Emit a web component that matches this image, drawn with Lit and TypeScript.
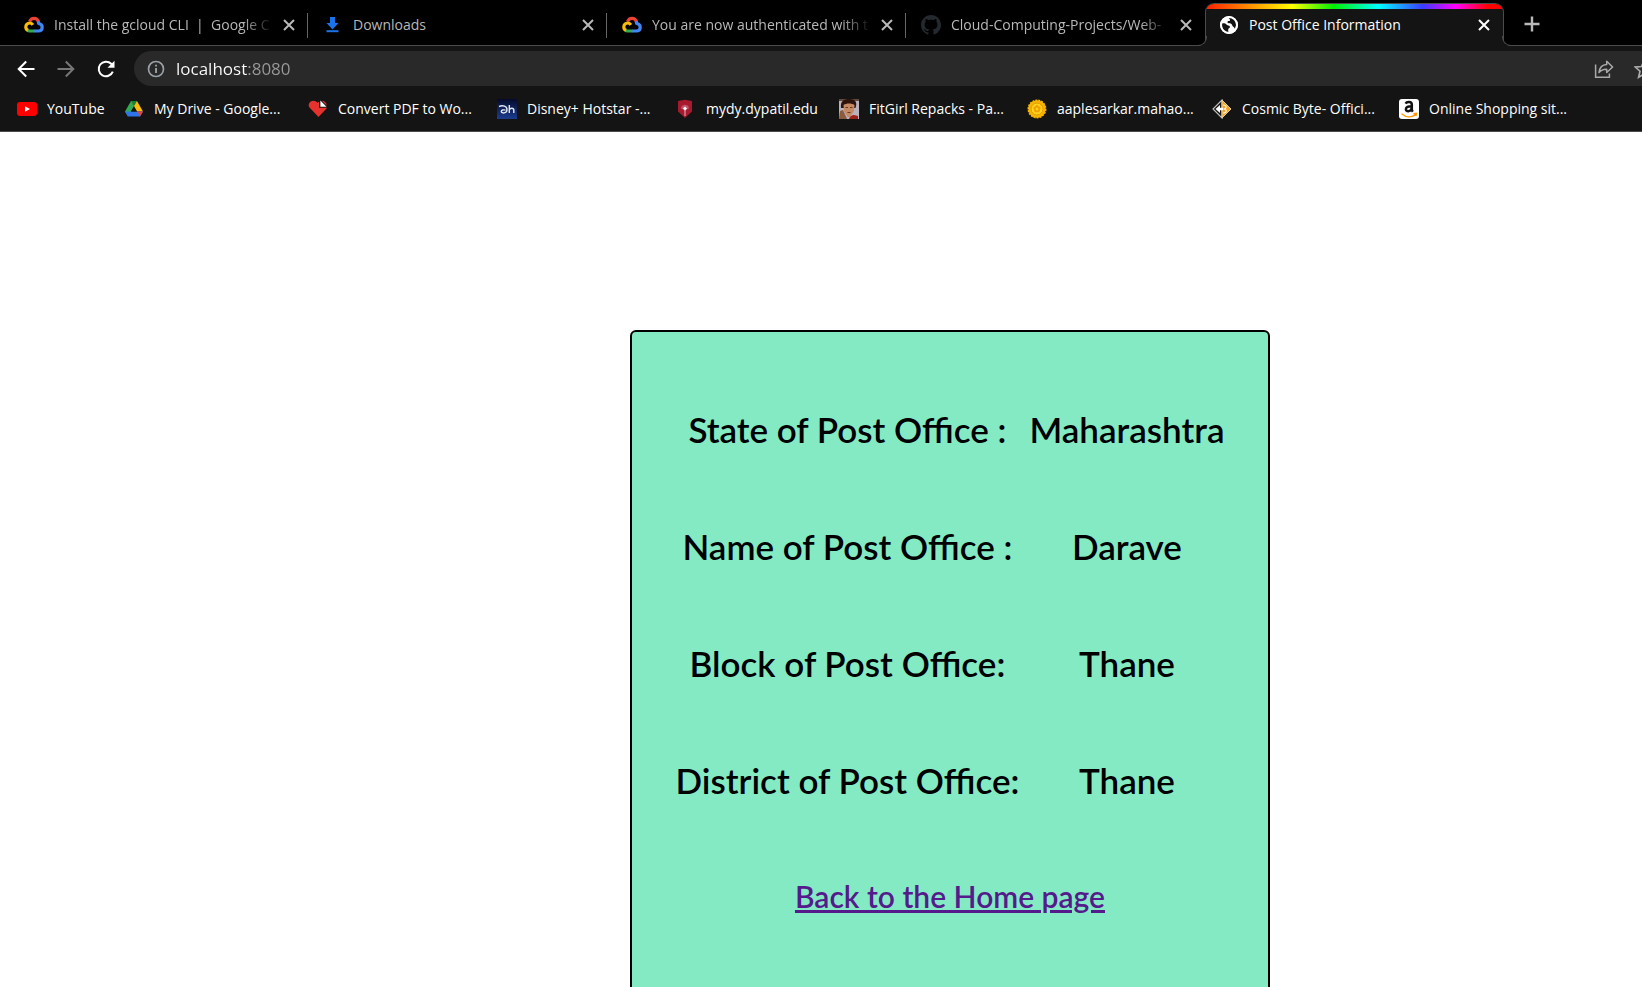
import { LitElement, html, css, svg, TemplateResult } from "lit";
import { customElement } from "lit/decorators.js";
import { classMap } from "lit/directives/class-map.js";

interface Tab {
  title: string;
  icon: TemplateResult;
  active?: boolean;
  faded?: boolean;
}

interface Bookmark {
  label: string;
  icon: TemplateResult;
}

const glyph = (body: TemplateResult, box = 20) =>
  html`<svg class="glyph" viewBox="0 0 ${box} ${box}" aria-hidden="true">${body}</svg>`;

const cloud = glyph(svg`
  <g fill="none" stroke-width="3.2" stroke-linejoin="round">
    <path d="M5.600 6.600C6.600 4 8.400 3.400 10 3.400s3.800 1 4.600 3.600" stroke="#ea4335"/>
    <path d="M14.200 6.200c.3 1 .4 1.600.4 2.300 2.400.3 3.600 1.900 3.600 3.700 0 2.300-1.600 3.800-3.900 3.800H10" stroke="#4285f4"/>
    <path d="M10.300 16H5.500c-.9 0-1.500-.2-2.200-.6" stroke="#34a853"/>
    <path d="M4 15.300C2.500 14.600 1.800 13.300 1.800 11.900c0-2.300 1.800-3.900 3.800-3.900 1.500 0 2.600.7 3.300 1.800" stroke="#fbbc05"/>
  </g>`);

const download = glyph(svg`
  <path d="M7 2h5v6h3.500l-6 6.500-6-6.500H7z" fill="#1a73e8"/>
  <path d="M3.500 15.200h12v2h-12z" fill="#1a73e8"/>`);

const github = glyph(
  svg`<path fill="#24292f" d="M8 0C3.580 0 0 3.580 0 8c0 3.540 2.290 6.530 5.470 7.590.4.070.550-.170.550-.380 0-.190-.010-.820-.010-1.490-2.010.370-2.530-.490-2.690-.940-.090-.230-.480-.940-.820-1.130-.280-.150-.680-.520-.010-.530.630-.010 1.080.580 1.230.820.720 1.210 1.870.870 2.330.660.070-.520.280-.870.510-1.070-1.780-.200-3.640-.890-3.640-3.950 0-.870.310-1.590.820-2.150-.080-.200-.360-1.020.080-2.120 0 0 .670-.210 2.200.820.640-.180 1.320-.270 2-.270s1.360.090 2 .270c1.530-1.040 2.200-.820 2.200-.820.440 1.100.160 1.920.080 2.120.510.560.820 1.270.820 2.150 0 3.070-1.870 3.750-3.650 3.950.290.250.540.730.540 1.480 0 1.070-.010 1.930-.010 2.200 0 .210.150.460.550.380A8 8 0 0 0 8 0z"/>`,
  16
);

const globe = glyph(svg`
  <circle cx="10" cy="10" r="9" fill="#fff"/>
  <path d="M2.800 8.500c1.800-.6 3.700-.2 4.700 1.100.7.900 1.700.8 2.600 1.100 1.300.5 1 2-.1 2.500-1 .5-.9 1.700-.6 3.900C5.500 17 2.400 13.500 2.800 8.500z" fill="#141414"/>
  <path d="M9.700 3c2.700-.6 5.600 1 6.800 3.600 1.100 2.400.8 5.200-.6 7.200-.4-1.600-1.500-1.700-2.200-2.600-.9-1.200-.6-2.200-2-2.600-1.300-.3-2.700.1-3.200-1-.4-1.100.7-1.600 1.700-1.500C11.500 6.200 11.300 4.500 9.700 3z" fill="#141414"/>
  <circle cx="10" cy="10" r="8" fill="none" stroke="#fff" stroke-width="2"/>`);

const cross = glyph(svg`<path d="M5 5l10 10M15 5 5 15" fill="none" stroke="currentColor" stroke-width="2"/>`);
const plus = glyph(svg`<path d="M10 2.500v15M2.500 10h15" fill="none" stroke="currentColor" stroke-width="2.400"/>`);
const back = glyph(svg`<path d="M18.500 10H3M10.200 2.500 2.700 10l7.500 7.500" fill="none" stroke="currentColor" stroke-width="2"/>`);
const forward = glyph(svg`<path d="M1.500 10H17M9.800 2.500l7.500 7.500-7.500 7.500" fill="none" stroke="currentColor" stroke-width="2"/>`);
const reload = glyph(svg`
  <path d="M16.800 12.600A7.300 7.300 0 1 1 15.200 4.800l1.600 1.700" fill="none" stroke="currentColor" stroke-width="2"/>
  <path d="M18.500 1.800v7h-7z" fill="currentColor"/>`);
const info = glyph(svg`
  <circle cx="10" cy="10" r="7.500" fill="none" stroke="currentColor" stroke-width="1.700"/>
  <path d="M9.100 9h1.900v5H9.100zM9.100 5.800h1.900v1.800H9.100z" fill="currentColor"/>`);
const share = glyph(svg`
  <path d="M1.600 5.500v12.700h13.800v-3.600" fill="none" stroke="currentColor" stroke-width="1.500"/>
  <path d="M5 13.500C5.600 8.500 8.800 5.800 12.700 5.600V2.200L18.600 8l-5.900 5.500v-3.300C9.600 10.100 7 11 5 13.500z" fill="none" stroke="currentColor" stroke-width="1.500" stroke-linejoin="round"/>`);
const star = glyph(svg`<path d="m10 1.800 2.500 5.700 6.200.6-4.700 4.100 1.400 6.100-5.400-3.200-5.400 3.200 1.400-6.100L1.300 8.100l6.200-.6z" fill="none" stroke="currentColor" stroke-width="1.700"/>`);

const youtube = glyph(svg`
  <rect x="0" y="3" width="20" height="14" rx="3" fill="#f00"/>
  <path d="M8 7.200v5.600l5-2.800z" fill="#fff"/>`);
const drive = glyph(svg`
  <path d="M7 2 1 12.500l3 5L10 7.200z" fill="#34a853"/>
  <path d="M7 2h6l6 10.500h-6z" fill="#fbbc05"/>
  <path d="M7 2h6l-3 5.200z" fill="#188038"/>
  <path d="M1 12.500h18l-3 5H4z" fill="#2f74e8"/>
  <path d="M10 7.400 7.100 12.400h5.800z" fill="#141414"/>
  <path d="M13.500 12.500H19l-3 5z" fill="#ea4335"/>`);
const heart = glyph(svg`
  <path d="M10.500 18 1.500 8.600C.2 7 .4 4.200 2.400 2.700 4.900 1 7.800 1.600 9.600 4.100L11 2.500v6.300h8.200z" fill="#e5322d"/>
  <path d="M12.400 1.500v6.200h6.100z" fill="#fff"/>
  <path d="M13.800 1.700c2.400 0 4.700 1.900 5 4.700z" fill="#e5322d"/>`);
const hotstar = glyph(svg`
  <defs><linearGradient id="hs" x2="0" y2="1"><stop stop-color="#050a2c"/><stop offset="1" stop-color="#1b3d8f"/></linearGradient></defs>
  <rect width="20" height="20" fill="url(#hs)"/>
  <path d="M2 7.500c4-1.600 8-.3 8 3.200 0 3.700-5.500 4.200-5.700 1.700-.1-1.500 2.500-1.700 4.200-1.300M12.300 6v8M12.300 11c.7-2.200 4.500-2.600 4.500.4V14" fill="none" stroke="#e4e8f5" stroke-width="1.400"/>`);
const crest = glyph(svg`
  <path d="M2 2 9 .8 16 2v10.500L9 19l-7-6.500z" fill="#a6192e"/>
  <path d="M5 9.500c0-5 8-5 8 0l-4 2z" fill="#c0566a"/>
  <path d="M7 9.500 9 7.500l2 2-2 2z" fill="#fff"/>
  <path d="M9 11v6" stroke="#e8b9bf" stroke-width="1"/>`);
const portrait = glyph(svg`
  <rect width="20" height="20" fill="#b9b2bd"/>
  <path d="M0 0h20v2H0z" fill="#5f4a3c"/>
  <path d="M2 9C1 2 5 0 10 0s9 2 6.500 9z" fill="#2e130d"/>
  <path d="M4.500 6c3-2 8-2 11 0l-.5 6-4 6H8.500L5 12z" fill="#c58a63"/>
  <path d="M0 20l1-8 3-1 4 9z" fill="#8c5a3e"/>
  <path d="M10 20c1-3 3-4 5-4l4 1v3z" fill="#9f2219"/>
  <path d="M6.500 8.500h2.500M11 8.500h2.500M8.500 13.500h3" stroke="#6b3826" stroke-width="1"/>`);
const seal = glyph(svg`
  <circle cx="10" cy="10" r="8.700" fill="#f7b500" stroke="#f7b500" stroke-width="1.600" stroke-dasharray="2 1"/>
  <circle cx="10" cy="10" r="6" fill="#ffd21f" stroke="#e79a00" stroke-width="1"/>
  <path d="m10 5.800 3.800 2.900-1.500 4.600H7.700L6.200 8.700z" fill="#f0a000"/>
  <circle cx="10" cy="10" r="1.500" fill="#ffcf1a"/>`);
const cosmic = glyph(svg`
  <path d="M10 1v18l-9-9z" fill="#111" stroke="#bbb" stroke-width="1.200"/>
  <path d="M10 1l9 9-9 9z" fill="#f0a422" stroke="#e0c9a0" stroke-width="1"/>
  <path d="M3.500 10 8 6v2.700h3v2.600H8V14z" fill="#fff"/>
  <path d="M11 6c4 0 4 3.600.5 4 4 .4 3.500 4-.5 4" fill="none" stroke="#fff1cf" stroke-width="1.200"/>`);
const amazon = glyph(svg`
  <rect width="20" height="20" rx="3" fill="#fff"/>
  <path d="M6.600 4.600C7.600 2.600 12.800 2.200 12.800 5.600v5.200c0 .8.400 1.200 1 1.900M12.600 7.200C9 7.100 6.900 8 6.900 10.300c0 2.600 4.600 2.600 5.700-.6" fill="none" stroke="#111" stroke-width="2.500"/>
  <path d="M2.500 14.800c4.500 3.800 10 3.800 14 .8M14.500 14.800l3-.4-.6 2.600" fill="none" stroke="#f90" stroke-width="1.400"/>`);

const TABS: Tab[] = [
  { title: "Install the gcloud CLI  |  Google C", icon: cloud, faded: true },
  { title: "Downloads", icon: download },
  { title: "You are now authenticated with t", icon: cloud, faded: true },
  { title: "Cloud-Computing-Projects/Web-", icon: github, faded: true },
  { title: "Post Office Information", icon: globe, active: true },
];

const BOOKMARKS: Bookmark[] = [
  { label: "YouTube", icon: youtube },
  { label: "My Drive - Google...", icon: drive },
  { label: "Convert PDF to Wo...", icon: heart },
  { label: "Disney+ Hotstar -...", icon: hotstar },
  { label: "mydy.dypatil.edu", icon: crest },
  { label: "FitGirl Repacks - Pa...", icon: portrait },
  { label: "aaplesarkar.mahao...", icon: seal },
  { label: "Cosmic Byte- Offici...", icon: cosmic },
  { label: "Online Shopping sit...", icon: amazon },
];

const RECORD: [string, string][] = [
  ["State of Post Office :", "Maharashtra"],
  ["Name of Post Office :", "Darave"],
  ["Block of Post Office:", "Thane"],
  ["District of Post Office:", "Thane"],
];

const shared = css`
  :host, * { box-sizing: border-box; }
  .glyph { display: block; width: 20px; height: 20px; flex: none; }
  button { display: grid; place-items: center; padding: 0; border: 0; background: none; font: inherit; color: inherit; }
`;

@customElement("tab-strip")
class TabStrip extends LitElement {
  static styles = [
    shared,
    css`
      :host { display: flex; height: 46px; padding: 3px 0 0 9px; background: #000; border-bottom: 1px solid #4b4b4b; color: #b8b8b8; }
      .tab { position: relative; display: flex; align-items: center; flex: 0 0 299px; min-width: 0; height: 43px; padding: 1px 9px 0 15px; }
      .tab::after { content: ""; width: 1px; height: 25px; background: #666; position: absolute; right: 0; top: 10px; }
      .tab.before-active::after { display: none; }
      .title { flex: 1; min-width: 0; display: block; margin: 0 6px 0 10px; text-align: left; overflow: hidden; white-space: pre; line-height: 24px; }
      .title.faded { mask-image: linear-gradient(to right, #000 calc(100% - 30px), transparent); }
      .active { background: #141414; border: 1px solid #4b4b4b; border-bottom: 0; border-radius: 9px 9px 0 0; color: #fff; padding: 0 9px 0 13px; }
      .active::before, .tab.active::after { content: ""; position: absolute; top: auto; bottom: 0; width: 9px; height: 9px; border: 1px solid #4b4b4b; border-top: 0; background: none; }
      .active::before { left: -9px; border-left: 0; border-bottom-right-radius: 9px; box-shadow: 3px 3px 0 #141414; clip-path: inset(0 -1px 0 0); }
      .tab.active::after { right: -9px; border-right: 0; border-bottom-left-radius: 9px; box-shadow: -3px 3px 0 #141414; clip-path: inset(0 0 0 -1px); }
      .stripe { position: absolute; inset: 0; border-radius: 8px 8px 0 0; overflow: hidden; pointer-events: none; }
      .stripe::before { content: ""; display: block; height: 5px; background: linear-gradient(to right, #ff2000 0, #ff7a00 12%, #ffff00 29%, #00f000 43%, #00ffff 58%, #3b3bff 73%, #ff00ff 84%, #ff0000 95%); }
      .add { width: 20px; margin: 0 0 0 18px; }
    `,
  ];

  render() {
    return html`
      ${TABS.map(
        (tab, i) => html`
          <div class=${classMap({ tab: true, active: !!tab.active, "before-active": !!TABS[i + 1]?.active })}>
            ${tab.active ? html`<span class="stripe"></span>` : null}
            ${tab.icon}
            <button class=${classMap({ title: true, faded: !!tab.faded })}>${tab.title}</button>
            <button class="close" aria-label="Close tab">${cross}</button>
          </div>
        `
      )}
      <button class="add" aria-label="New tab">${plus}</button>
    `;
  }
}

@customElement("address-bar")
class AddressBar extends LitElement {
  static styles = [
    shared,
    css`
      :host { display: flex; align-items: center; height: 45px; padding: 0 0 0 16px; background: #141414; color: #fff; }
      nav { display: flex; gap: 20px; margin-right: 18px; }
      .off { color: #777; }
      .box { display: flex; flex: 1; min-width: 0; align-items: center; height: 35px; padding-left: 12px; background: #292929; border-radius: 18px 0 0 18px; color: #9aa0a6; overflow: hidden; }
      .url {
        flex: 1; min-width: 0; margin-left: 10px; padding: 0; border: 0; outline: 0;
        font: inherit; font-size: 17px; line-height: 24px;
        background: linear-gradient(to right, #fff 71px, #9a9a9a 71px); background-clip: text; -webkit-text-fill-color: transparent;
      }
      .share { margin-right: 20px; color: #aaa; }
      .star { width: 8px; overflow: hidden; justify-content: start; color: #aaa; }
    `,
  ];

  render() {
    return html`
      <nav aria-label="History">
        <button aria-label="Back">${back}</button>
        <button class="off" aria-label="Forward">${forward}</button>
        <button aria-label="Reload">${reload}</button>
      </nav>
      <div class="box">
        <button aria-label="Site information">${info}</button>
        <input class="url" aria-label="Address" .value=${"localhost:8080"} />
        <button class="share" aria-label="Share">${share}</button>
        <button class="star" aria-label="Bookmark this page">${star}</button>
      </div>
    `;
  }
}

@customElement("bookmark-bar")
class BookmarkBar extends LitElement {
  static styles = [
    shared,
    css`
      :host {
        display: grid; grid-template-columns: 107px 184px 189px 179px 163px 188px 185px 187px 1fr; align-items: center;
        height: 41px; padding: 0 0 4px 17px; background: #141414; border-bottom: 1px solid #4b4b4b; color: #fff;
      }
      a { display: flex; align-items: center; gap: 10px; color: inherit; text-decoration: none; white-space: nowrap; line-height: 24px; }
    `,
  ];

  render() {
    return BOOKMARKS.map((b) => html`<a href="#">${b.icon}<span>${b.label}</span></a>`);
  }
}

@customElement("post-office-card")
class PostOfficeCard extends LitElement {
  static styles = css`
    :host {
      display: flex; flex-direction: column; align-items: center; box-sizing: border-box; width: 640px;
      padding: 38px 0 96px; border: 2px solid #000; border-radius: 6px; background: #84eac3;
      font-family: Lato, sans-serif; font-weight: 600; color: #000;
    }
    table { border-collapse: collapse; }
    th, td { height: 117px; padding: 0 5px; font-size: 35px; line-height: 44px; font-weight: 600; text-align: center; white-space: nowrap; }
    a { display: block; padding: 38px 0; font-size: 30px; line-height: 40px; color: #551a8b; }
  `;

  render() {
    return html`
      <table>
        <tbody>
          ${RECORD.map(([k, v]) => html`<tr><th scope="row">${k}</th><td>${v}</td></tr>`)}
        </tbody>
      </table>
      <a href="#">Back to the Home page</a>
    `;
  }
}

@customElement("app-root")
class AppRoot extends LitElement {
  static styles = css`
    :host {
      display: flex; flex-direction: column; height: 100vh; overflow: hidden; background: #fff;
      font-family: "Open Sans", sans-serif; font-size: 14px;
    }
    main { display: flex; justify-content: center; align-items: flex-start; flex: 1; min-height: 0; padding: 198px 0 0 258px; }
  `;

  render() {
    return html`
      <tab-strip></tab-strip>
      <address-bar></address-bar>
      <bookmark-bar></bookmark-bar>
      <main><post-office-card></post-office-card></main>
    `;
  }
}
